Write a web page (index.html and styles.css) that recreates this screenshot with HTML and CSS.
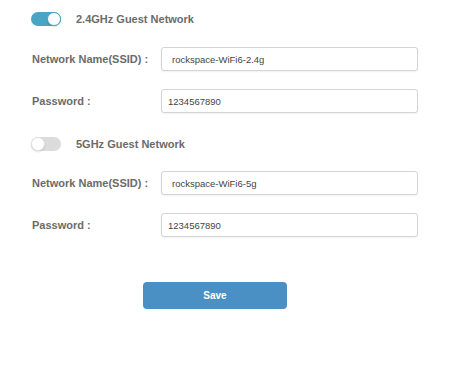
FILE: index.html
```html
<!DOCTYPE html>
<html lang="en">
<head>
    <meta charset="UTF-8">
    <meta name="viewport" content="width=device-width, initial-scale=1.0">
    <title>Guest Network</title>
    <link rel="stylesheet" href="styles.css">
</head>
<body>

<div class="guest-page">

    <!-- 2.4GHz -->
    <div class="section-head">
        <span class="switch on"><span class="knob"></span></span>
        <span class="section-title">2.4GHz Guest Network</span>
    </div>
    <div class="field first">
        <label class="field-label">Network Name(SSID) :</label>
        <input class="field-input ssid" type="text" value="rockspace-WiFi6-2.4g">
    </div>
    <div class="field">
        <label class="field-label">Password :</label>
        <input class="field-input pwd" type="text" value="1234567890">
    </div>

    <!-- 5GHz -->
    <div class="section-head second">
        <span class="switch"><span class="knob"></span></span>
        <span class="section-title">5GHz Guest Network</span>
    </div>
    <div class="field first">
        <label class="field-label">Network Name(SSID) :</label>
        <input class="field-input ssid" type="text" value="rockspace-WiFi6-5g">
    </div>
    <div class="field">
        <label class="field-label">Password :</label>
        <input class="field-input pwd" type="text" value="1234567890">
    </div>

    <div class="actions">
        <button class="save-btn">Save</button>
    </div>
</div>

</body>
</html>
```

FILE: styles.css
```css
* {
    margin: 0;
    padding: 0;
    box-sizing: border-box;
    font-family: 'Liberation Sans', Arial, sans-serif;
}

body {
    background-color: #fff;
    color: #333;
}

.guest-page {
    padding: 12px 0 0 31px;
}

.section-head {
    display: flex;
    align-items: center;
    height: 14px;
}

.section-head.second {
    margin-top: 24px;
}

.switch {
    position: relative;
    width: 30px;
    height: 14px;
    border-radius: 7px;
    background-color: #dcdcdc;
    flex-shrink: 0;
}

.switch .knob {
    position: absolute;
    top: 0;
    left: 0;
    width: 14px;
    height: 14px;
    border-radius: 50%;
    background-color: #fff;
    border: 1px solid #e2e2e2;
    box-shadow: 0 1px 2px rgba(0, 0, 0, 0.12);
}

.switch.on {
    background-color: #4aa5c4;
}

.switch.on .knob {
    left: 16px;
    border-color: #4aa5c4;
}

.section-title {
    margin-left: 15px;
    font-size: 11px;
    font-weight: bold;
    color: #6b6b6b;
}

.field {
    display: flex;
    align-items: center;
    height: 24px;
    margin-top: 18px;
}

.field.first {
    margin-top: 21px;
}

.section-head.second + .field.first {
    margin-top: 20px;
}

.field-label {
    width: 130px;
    padding-left: 1px;
    font-size: 11px;
    font-weight: bold;
    color: #6b6b6b;
}

.field-input {
    width: 257px;
    height: 24px;
    border: 1px solid #d4d4d4;
    border-radius: 3px;
    box-shadow: 0 1px 2px rgba(0, 0, 0, 0.06);
    font-size: 9.5px;
    color: #444;
    outline: none;
    background-color: #fff;
}

.field-input.ssid {
    padding-left: 10px;
}

.field-input.pwd {
    padding-left: 6px;
}

.actions {
    margin-top: 45px;
    padding-left: 112px;
}

.save-btn {
    width: 144px;
    height: 27px;
    border: none;
    border-radius: 4px;
    background-color: #4a90c5;
    color: #fff;
    font-size: 10px;
    font-weight: bold;
    cursor: pointer;
}
```
